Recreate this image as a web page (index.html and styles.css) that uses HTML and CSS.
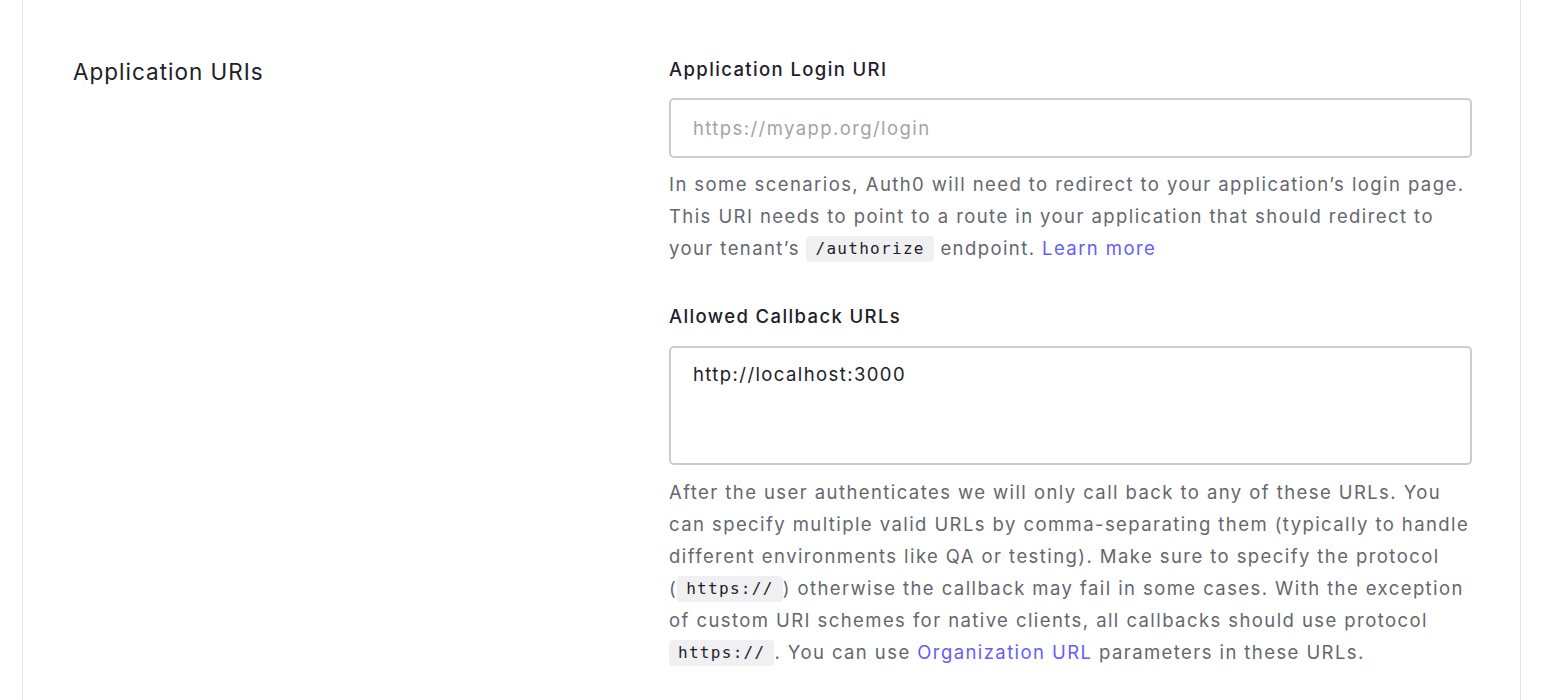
FILE: index.html
```html
<!DOCTYPE html>
<html lang="en">
<head>
<meta charset="utf-8">
<title>Application URIs</title>
<link rel="stylesheet" href="styles.css">
</head>
<body>
<div class="page">
  <section class="card">
    <div class="section-grid">
      <h2 class="section-title">Application URIs</h2>
      <div class="fields">
        <div class="field">
          <label class="field-label" for="login-uri">Application Login URI</label>
          <input id="login-uri" class="text-input" type="text" placeholder="https://myapp.org/login">
          <p class="help">In some scenarios, Auth0 will need to redirect to your application’s login page. This URI needs to point to a route in your application that should redirect to your tenant’s <code class="code">/authorize</code> endpoint. <a class="link" href="#">Learn more</a></p>
        </div>
        <div class="field">
          <label class="field-label" for="callbacks">Allowed Callback URLs</label>
          <textarea id="callbacks" class="text-area">http://localhost:3000</textarea>
          <p class="help">After the user authenticates we will only call back to any of these URLs. You can specify multiple valid URLs by comma-separating them (typically to handle different environments like QA or testing). Make sure to specify the protocol <span class="nowrap">(<code class="code">https://</code>)</span> otherwise the callback may fail in some cases. With the exception of custom URI schemes for native clients, all callbacks should use protocol <span class="nowrap"><code class="code">https://</code>.</span> You can use <a class="link" href="#">Organization URL</a> parameters in these URLs.</p>
        </div>
      </div>
    </div>
  </section>
</div>
</body>
</html>
```

FILE: styles.css
```css
* { box-sizing: border-box; }
html, body {
  margin: 0;
  padding: 0;
  background: #ffffff;
  font-family: Inter, "Noto Sans", sans-serif;
  color: #1e212a;
}
.page {
  padding: 0 29px 0 22px;
}
.card {
  border-left: 1px solid #e3e3e6;
  border-right: 1px solid #e3e3e6;
  background: #ffffff;
  padding: 55px 48px 40px 50px;
  min-height: 700px;
}
.section-grid {
  display: grid;
  grid-template-columns: 596px 1fr;
}
.section-title {
  margin: 1px 0 0 0;
  font-size: 22.5px;
  font-weight: 400;
  line-height: 32px;
  letter-spacing: 1px;
  color: #1e212a;
}
.fields {
  display: flex;
  flex-direction: column;
  gap: 38px;
}
.field {
  display: flex;
  flex-direction: column;
}
.field-label {
  font-size: 18.5px;
  font-weight: 500;
  line-height: 28px;
  letter-spacing: 1.38px;
  color: #1e212a;
  margin-bottom: 15px;
}
.text-input,
.text-area {
  width: 100%;
  border: 2px solid #cbcbd0;
  border-radius: 5px;
  font-family: Inter, "Noto Sans", sans-serif;
  font-size: 18.5px;
  letter-spacing: 1.41px;
  color: #1e212a;
  padding: 0 22px;
  background: #ffffff;
  outline: none;
}
.text-input {
  height: 60px;
}
.text-input::placeholder {
  color: #a3a3a8;
}
.text-area {
  height: 119px;
  margin-top: 1px;
  padding-top: 12px;
  line-height: 28px;
  resize: none;
}
.help {
  margin: 10px 0 0 0;
  font-size: 18.5px;
  line-height: 32px;
  letter-spacing: 1.42px;
  color: #65676e;
}
.text-area + .help {
  margin-top: 11px;
}
.nowrap {
  white-space: nowrap;
}
.code {
  display: inline-block;
  font-family: "DejaVu Sans Mono", "Liberation Mono", monospace;
  font-size: 16px;
  line-height: 18px;
  background: #f0f0f2;
  border-radius: 4px;
  padding: 4px 9px;
  color: #1e212a;
  letter-spacing: 1.3px;
  vertical-align: 1px;
}
.link {
  color: #635dff;
  text-decoration: none;
}
```
